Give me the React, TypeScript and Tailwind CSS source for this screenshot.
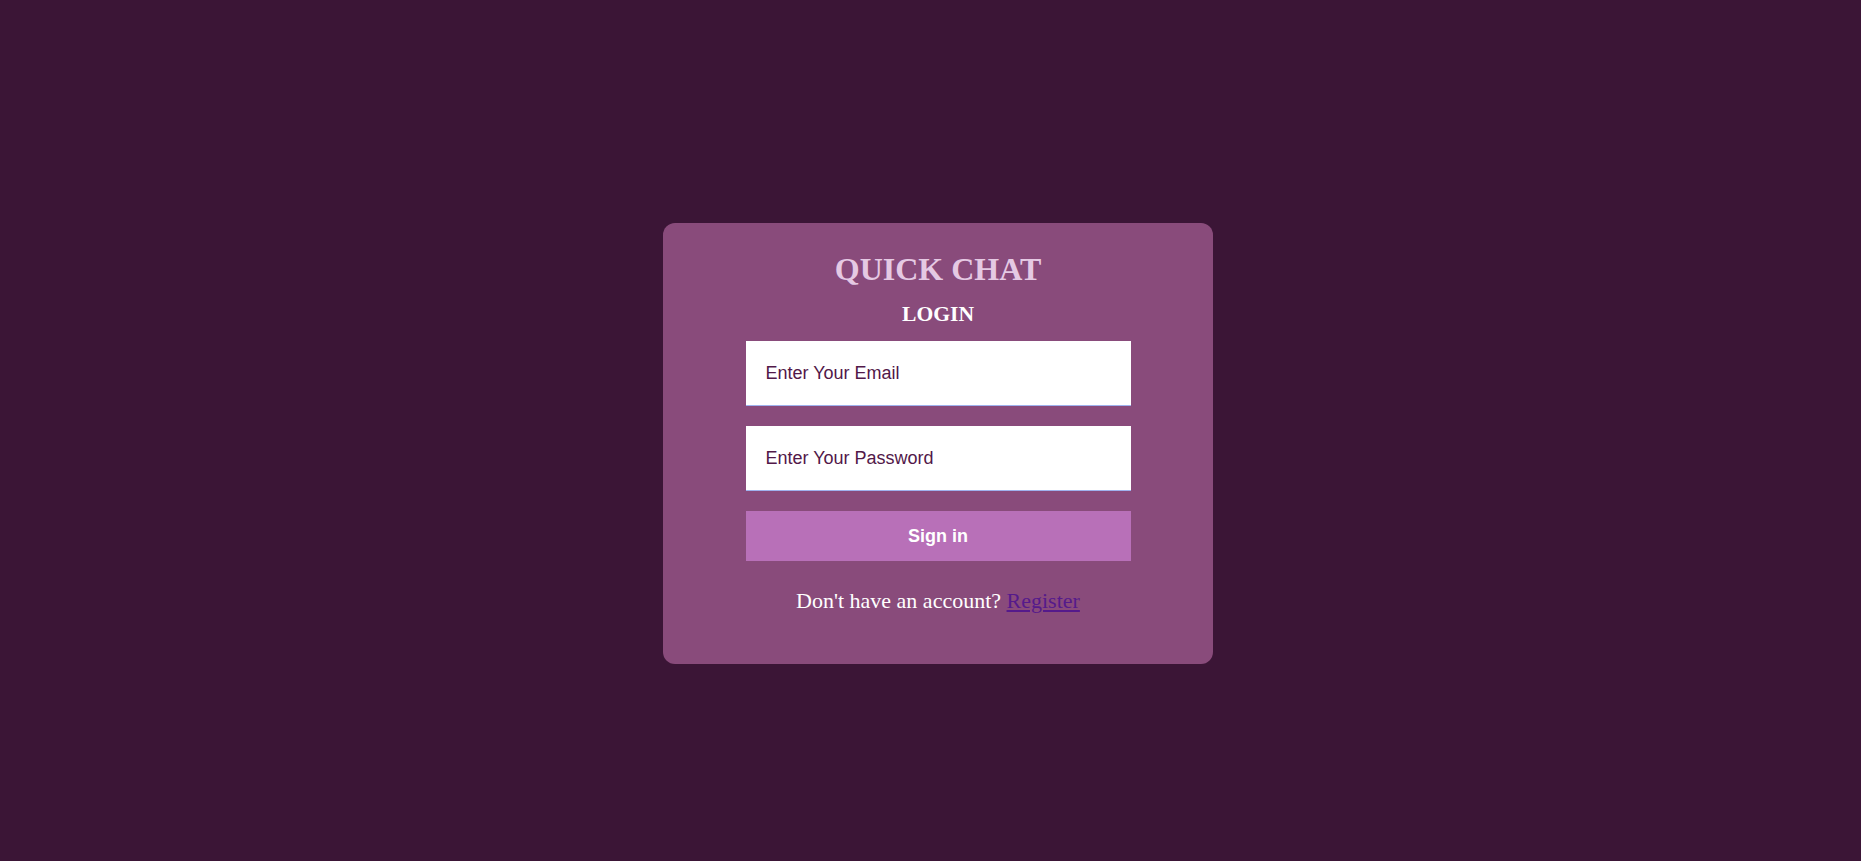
import React, { useState } from 'react';

export default function App() {
  const [email, setEmail] = useState('');
  const [password, setPassword] = useState('');

  return (
    <div className="min-h-screen w-full bg-[#3b1536] flex items-center justify-center pl-[15px] pt-[26px]">
      <div className="w-[550px] rounded-xl bg-[#894b7b] pt-[26px] pb-[50px] flex flex-col items-center font-['Liberation_Serif',serif]">
        <h1 className="text-[32px] leading-[40px] font-bold text-[#e5c9e3]">QUICK CHAT</h1>
        <h2 className="mt-[11px] text-[21.6px] leading-[28px] font-bold text-white">LOGIN</h2>

        <form
          className="mt-[13px] w-[70%] flex flex-col gap-[20px]"
          onSubmit={(e) => e.preventDefault()}
        >
          <input
            type="email"
            value={email}
            onChange={(e) => setEmail(e.target.value)}
            placeholder="Enter Your Email"
            className="h-[65px] w-full bg-white border-b border-[#9fb2ee] px-[20px] text-[18px] text-[#521849] placeholder:text-[#521849] font-['Liberation_Sans',sans-serif] outline-none"
          />
          <input
            type="password"
            value={password}
            onChange={(e) => setPassword(e.target.value)}
            placeholder="Enter Your Password"
            className="h-[65px] w-full bg-white border-b border-[#9fb2ee] px-[20px] text-[18px] text-[#521849] placeholder:text-[#521849] font-['Liberation_Sans',sans-serif] outline-none"
          />
          <button
            type="submit"
            className="h-[50px] w-full bg-[#b870b8] text-white text-[18px] font-bold font-['Liberation_Sans',sans-serif]"
          >
            Sign in
          </button>
        </form>

        <p className="mt-[27px] text-[22px] leading-[26px] text-white">
          Don't have an account?{' '}
          <a href="#" className="text-[#551a8b] underline">
            Register
          </a>
        </p>
      </div>
    </div>
  );
}
